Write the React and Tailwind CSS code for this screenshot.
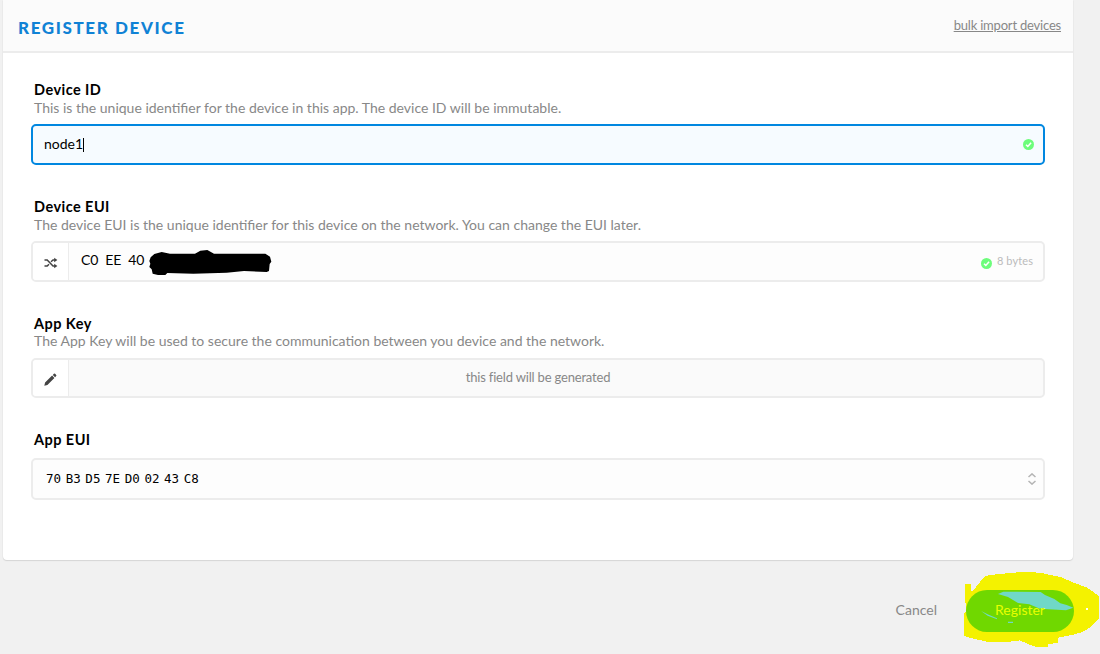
import React from "react";

function Check({ className = "" }) {
  return (
    <svg className={`h-[11px] w-[11px] shrink-0 ${className}`} viewBox="0 0 11 11">
      <circle cx="5.5" cy="5.5" r="5.5" fill="#6dfd7b" />
      <path d="M3 5.8 4.8 7.4 8.1 3.7" fill="none" stroke="#fff" strokeWidth="1.5" />
    </svg>
  );
}

function Shuffle() {
  return (
    <svg className="mt-[3px] h-3 w-3.5" viewBox="0 0 14 12" fill="none" stroke="#444" strokeWidth="1.5">
      <path d="M0.5 3H3.2L9 9H11M0.5 9H3.2L5 7.2M7 4.8 9 3H11" />
      <path d="M10.2 .8 13.4 3 10.2 5.2ZM10.2 6.8 13.4 9 10.2 11.2Z" fill="#444" stroke="none" />
    </svg>
  );
}

function Pencil() {
  return (
    <svg className="mt-[3px] h-[13px] w-[13px]" viewBox="0 0 13 13" fill="#444">
      <path d="M0.3 12.7 1.1 9.6 8.1 2.6 10.4 4.9 3.4 11.9ZM8.8 1.9 9.9 .8Q10.5 .3 11.1 .8L12.2 1.9Q12.7 2.5 12.2 3.1L11.1 4.2Z" />
    </svg>
  );
}

function Label({ title, text, textClass = "leading-[18px]" }) {
  return (
    <div className="pl-[3px]">
      <div className="h-[18px] text-[14.5px] font-bold leading-[18px] tracking-[0.45px] text-black">{title}</div>
      {text && <div className={`h-[18px] whitespace-nowrap text-[14px] text-[#888] ${textClass}`}>{text}</div>}
    </div>
  );
}

export default function App() {
  return (
    <div className="h-[654px] w-[1100px] overflow-hidden bg-[#f1f1f1] pl-[3px] font-['Lato',sans-serif] text-[14px]">
      <main className="h-[560px] w-[1070px] rounded-b-[4px] bg-white shadow-[0_1px_1px_#d5d5d5,0_0_1px_#ccc]">
        <header className="flex h-[53px] items-center justify-between border-b-2 border-[#ececec] bg-[#fbfbfb] pl-[15px] pr-3">
          <h1 className="mt-1 whitespace-nowrap text-[17px] font-black leading-5 tracking-[1.62px] text-[#1082d5]">REGISTER DEVICE</h1>
          <a className="-mt-[2px] text-[13px] leading-5 tracking-[-0.2px] text-[#888] underline">bulk import devices</a>
        </header>
        <div className="flex flex-col pl-7 pr-7 pt-7">
          <section className="h-[117px] w-[1014px]">
            <Label title="Device ID" text="This is the unique identifier for the device in this app. The device ID will be immutable." />
            <div className="mt-[7px] flex h-[41px] items-center rounded-[5px] border-2 border-[#0087e0] bg-[#f6fbff] pl-[11px] pr-[9px]">
              <span className="pb-[2px] leading-5 text-black">node1</span>
              <span className="h-[14px] w-px bg-black" />
              <Check className="ml-auto" />
            </div>
          </section>
          <section className="h-[117px] w-[1014px]">
            <Label title="Device EUI" text="The device EUI is the unique identifier for this device on the network. You can change the EUI later." />
            <div className="relative mt-[7px] flex h-[41px] items-center overflow-hidden rounded-[5px] border-2 border-[#ececec] bg-[#fdfdfd] pr-[10px]">
              <div className="flex h-full w-9 items-center justify-center border-r border-[#ececec] bg-white"><Shuffle /></div>
              <span className="ml-3 whitespace-pre pb-[3px] leading-5 tracking-[-0.1px] text-black">C0  EE  40</span>
              <svg className="absolute left-[116px] top-[6px] h-[28px] w-[124px]" viewBox="387 174 372 84">
                <path d="M388 210 392 199 403 189 425 183 450 188 525 188 541 179 562 177 582 188 700 188 736 188 750 197 754 212 749 219 747 240 740 243 672 240 620 245 520 248 442 246 436 252 414 252 398 248 395 235 388 228 391 218Z" fill="#000" />
              </svg>
              <Check className="ml-auto mt-1" />
              <span className="ml-[5px] pb-[2px] text-[11px] leading-4 tracking-[0.1px] text-[#bbb]">8 bytes</span>
            </div>
          </section>
          <section className="h-[116px] w-[1014px]">
            <Label title="App Key" text="The App Key will be used to secure the communication between you device and the network." textClass="leading-[16px]" />
            <div className="mt-[7px] flex h-10 items-center overflow-hidden rounded-[5px] border-2 border-[#ececec] bg-[#fafafa]">
              <div className="flex h-full w-9 items-center justify-center border-r border-[#ececec] bg-white"><Pencil /></div>
              <span className="flex-1 pb-[2px] pr-[36px] text-center text-[13px] leading-5 tracking-[-0.18px] text-[#888]">this field will be generated</span>
            </div>
          </section>
          <section className="w-[1014px]">
            <Label title="App EUI" />
            <div className="mt-[9px] flex h-[42px] items-center rounded-[5px] border-2 border-[#ececec] bg-[#fdfdfd] pl-[13px] pr-[7px]">
              <span className="whitespace-pre font-['DejaVu_Sans_Mono',monospace] text-[12.5px] leading-5 text-black [word-spacing:-2.9px]">70 B3 D5 7E D0 02 43 C8</span>
              <svg className="ml-auto h-3 w-2" viewBox="0 0 8 12" fill="none" stroke="#b5b5b5" strokeWidth="1.5"><path d="M.5 4 4 .9 7.5 4M.5 8 4 11.1 7.5 8" /></svg>
            </div>
          </section>
        </div>
      </main>
      <footer className="relative flex h-[94px] items-start justify-end pr-[26px] pt-[30px]">
        <svg className="absolute left-[961px] top-[9px] h-[82px] w-[136px]" viewBox="72 27 408 246" shapeRendering="crispEdges">
          <path d="M75 71H93V92H99L135 48 160 44 220 38 250 36 300 38 325 44 365 52 400 68 440 82 477 108V176L450 203 425 217 400 224 355 233V248L325 253V260L290 261 265 253 240 241 200 246 140 245 100 236 73 228V160L77 155V130H75Z" fill="#f4f200" />
          <path d="M438 145H444V150H438Z" fill="#fff" />
        </svg>
        <span className="mr-[29px] mt-[10px] leading-5 text-[#888]">Cancel</span>
        <button className="relative h-[42px] w-[108px] rounded-full bg-[#70d800] pb-[2px] text-[14px] leading-5 text-[#e8ff00]">
          <svg className="absolute inset-0 h-full w-full" viewBox="78 90 324 126">
            <path d="M174 102 190 95 302 96 315 105 343 117 361 130 380 135 400 143 378 151 300 146 268 133 234 129 204 111ZM204 185H219V189H204ZM123 153 146 164 171 175V178L143 167Z" fill="#70d8c7" />
          </svg>
          <span className="relative">Register</span>
        </button>
      </footer>
    </div>
  );
}
